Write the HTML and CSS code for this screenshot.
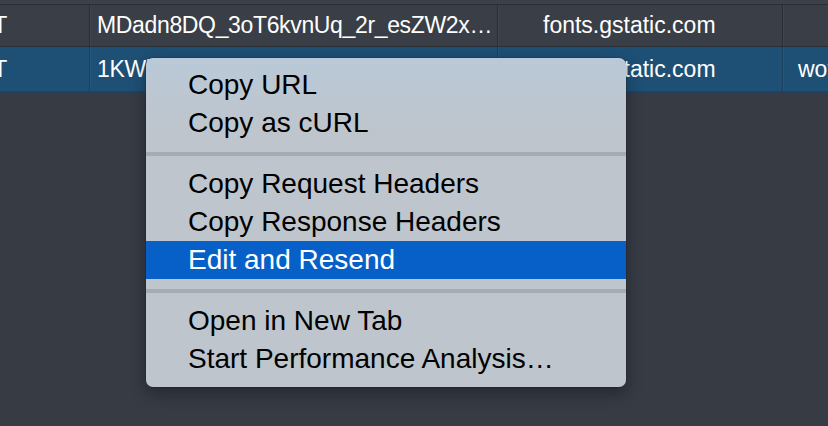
FILE: index.html
```html
<!DOCTYPE html>
<html>
<head>
<meta charset="utf-8">
<link rel="stylesheet" href="styles.css">
</head>
<body>
<div class="table">
  <div class="row-stub"></div>
  <div class="row">
    <div class="cell c1">GET</div>
    <div class="cell c2">MDadn8DQ_3oT6kvnUq_2r_esZW2x…</div>
    <div class="cell c3">fonts.gstatic.com</div>
    <div class="cell c4"></div>
  </div>
  <div class="row selected">
    <div class="cell c1">GET</div>
    <div class="cell c2">1KWlmLq_jw3YcVmAUqyP_tK4HHAC…</div>
    <div class="cell c3">fonts.gstatic.com</div>
    <div class="cell c4">woff2</div>
  </div>
</div>

<div class="menu">
  <div class="item">Copy URL</div>
  <div class="item">Copy as cURL</div>
  <div class="sep"></div>
  <div class="item">Copy Request Headers</div>
  <div class="item">Copy Response Headers</div>
  <div class="item active">Edit and Resend</div>
  <div class="sep"></div>
  <div class="item">Open in New Tab</div>
  <div class="item">Start Performance Analysis…</div>
</div>
</body>
</html>
```

FILE: styles.css
```css
html, body {
  margin: 0;
  padding: 0;
}
body {
  width: 828px;
  height: 426px;
  overflow: hidden;
  background: #363b44;
  font-family: "Liberation Sans", Arial, sans-serif;
  position: relative;
}
.table {
  margin-left: -48px;
  width: 900px;
}
.row-stub {
  height: 4px;
  background: #3b4049;
  border-bottom: 1px solid #2a2e35;
}
.row {
  display: grid;
  grid-template-columns: 137px 408px 285px 1fr;
  height: 41px;
  background: #393e47;
  border-bottom: 1px solid #2b2f36;
  color: #ffffff;
  font-size: 23px;
}
.row.selected {
  height: 44px;
  background: #1e4f75;
  border-bottom: 2px solid #28405a;
}
.cell {
  display: flex;
  align-items: center;
  white-space: nowrap;
  overflow: hidden;
  border-left: 1px solid #2a2e35;
  box-shadow: inset 1px 0 0 rgba(255,255,255,0.04);
}
.row.selected .cell {
  border-left-color: #1a3f5f;
}
.c1 {
  border-left: none;
  box-shadow: none;
  padding-left: 8px;
}
.c2 {
  padding-left: 7px;
  letter-spacing: -0.35px;
}
.c3 {
  padding-left: 45px;
}
.c4 {
  padding-left: 15px;
}
.menu {
  position: absolute;
  left: 146px;
  top: 58px;
  width: 480px;
  padding: 8px 0 9px;
  border-radius: 7px;
  background: linear-gradient(#b9c9d8 0px, #bcc7d2 35px, #bec5cd 70px, #bfc5cc 100%);
  box-shadow: 0 6px 16px rgba(0, 0, 0, 0.35), 0 0 0 0.5px rgba(0, 0, 0, 0.2);
  color: #000000;
  font-size: 28px;
  line-height: 38px;
}
.item {
  height: 38px;
  padding-left: 42px;
  white-space: nowrap;
}
.item.active {
  background: #0660c8;
  color: #ffffff;
}
.sep {
  height: 4px;
  margin: 10px 0 9px;
  background: #a5acb4;
}
```
